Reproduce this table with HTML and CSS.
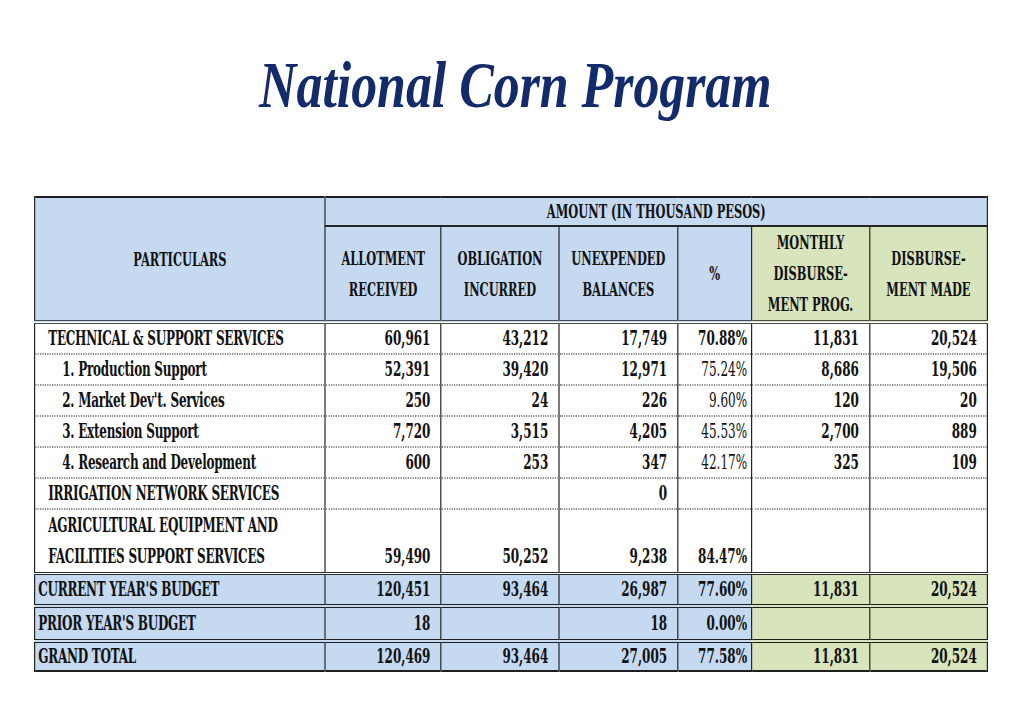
FILE: index.html
```html
<!DOCTYPE html>
<html lang="en">
<head>
<meta charset="utf-8">
<title>National Corn Program</title>
<link rel="stylesheet" href="styles.css">
</head>
<body>
<h1 class="title"><span class="title-text">National Corn Program</span></h1>
<div class="sheet-wrap">
<table class="sheet">
  <colgroup>
    <col class="c-part">
    <col class="c-alloc">
    <col class="c-oblig">
    <col class="c-unexp">
    <col class="c-pct">
    <col class="c-month">
    <col class="c-made">
  </colgroup>
  <thead>
    <tr class="hrow1">
      <th rowspan="2" class="blue part-h">PARTICULARS</th>
      <th colspan="6" class="blue amount">AMOUNT (IN THOUSAND PESOS)</th>
    </tr>
    <tr class="hrow2">
      <th class="blue">ALLOTMENT<br>RECEIVED</th>
      <th class="blue">OBLIGATION<br>INCURRED</th>
      <th class="blue">UNEXPENDED<br>BALANCES</th>
      <th class="blue">%</th>
      <th class="green">MONTHLY<br>DISBURSE-<br>MENT PROG.</th>
      <th class="green">DISBURSE-<br>MENT MADE</th>
    </tr>
  </thead>
  <tbody class="body-rows">
    <tr>
      <td class="lbl">TECHNICAL &amp; SUPPORT SERVICES</td>
      <td>60,961</td><td>43,212</td><td>17,749</td><td class="pct">70.88%</td><td>11,831</td><td>20,524</td>
    </tr>
    <tr>
      <td class="lbl sub">1. Production Support</td>
      <td>52,391</td><td>39,420</td><td>12,971</td><td class="pct reg">75.24%</td><td>8,686</td><td>19,506</td>
    </tr>
    <tr>
      <td class="lbl sub">2. Market Dev't. Services</td>
      <td>250</td><td>24</td><td>226</td><td class="pct reg">9.60%</td><td>120</td><td>20</td>
    </tr>
    <tr>
      <td class="lbl sub">3. Extension Support</td>
      <td>7,720</td><td>3,515</td><td>4,205</td><td class="pct reg">45.53%</td><td>2,700</td><td>889</td>
    </tr>
    <tr>
      <td class="lbl sub">4. Research and Development</td>
      <td>600</td><td>253</td><td>347</td><td class="pct reg">42.17%</td><td>325</td><td>109</td>
    </tr>
    <tr>
      <td class="lbl">IRRIGATION NETWORK SERVICES</td>
      <td></td><td></td><td>0</td><td class="pct"></td><td></td><td></td>
    </tr>
    <tr class="tall">
      <td class="lbl">AGRICULTURAL EQUIPMENT AND<br>FACILITIES SUPPORT SERVICES</td>
      <td>59,490</td><td>50,252</td><td>9,238</td><td class="pct">84.47%</td><td></td><td></td>
    </tr>
  </tbody>
  <tbody class="totals">
    <tr class="t-current">
      <td class="lbl tot blue">CURRENT YEAR'S BUDGET</td>
      <td class="blue">120,451</td><td class="blue">93,464</td><td class="blue">26,987</td><td class="pct blue">77.60%</td><td class="green">11,831</td><td class="green">20,524</td>
    </tr>
    <tr class="t-prior">
      <td class="lbl tot blue">PRIOR YEAR'S BUDGET</td>
      <td class="blue">18</td><td class="blue"></td><td class="blue">18</td><td class="pct blue">0.00%</td><td class="green"></td><td class="green"></td>
    </tr>
    <tr class="t-grand">
      <td class="lbl tot blue">GRAND TOTAL</td>
      <td class="blue">120,469</td><td class="blue">93,464</td><td class="blue">27,005</td><td class="pct blue">77.58%</td><td class="green">11,831</td><td class="green">20,524</td>
    </tr>
  </tbody>
</table>
</div>
</body>
</html>
```
FILE: styles.css
```css
html, body {
  margin: 0;
  padding: 0;
  overflow: hidden;
  background: #ffffff;
}

.title {
  margin: 52px 0 0 0;
  text-align: center;
  font-family: "Liberation Serif", "DejaVu Serif", serif;
  font-style: italic;
  font-weight: bold;
  font-size: 66px;
  line-height: 66px;
  color: #132a6b;
}

.title-text {
  display: inline-block;
  transform: scaleX(0.785);
  transform-origin: 50% 50%;
  padding-left: 10px;
}

.sheet-wrap {
  margin: 78px 0 0 34px;
}

.sheet {
  --k: 0.6;
  border-collapse: collapse;
  table-layout: fixed;
  width: calc(954px / var(--k));
  transform: scaleX(var(--k));
  transform-origin: 0 0;
  border: 2px solid #1e1e1e;
  font-family: "DejaVu Serif", "Liberation Serif", serif;
  font-weight: bold;
  color: #111111;
}

.c-part { width: 30.5%; }
.c-alloc { width: 12.16%; }
.c-oblig { width: 12.37%; }
.c-unexp { width: 12.47%; }
.c-pct { width: 7.76%; }
.c-month { width: 12.37%; }
.c-made { width: 12.37%; }

.sheet th,
.sheet td {
  border-left: 2.5px solid #262626;
  border-right: 2.5px solid #262626;
  padding: 0;
  white-space: nowrap;
}

.sheet th {
  font-size: 19px;
  line-height: 31px;
  text-align: center;
  vertical-align: middle;
  font-weight: bold;
}

.blue { background: #c5d9f1; }
.green { background: #d8e4bc; }

.hrow1 .amount {
  height: 27px;
  line-height: 27px;
  border-bottom: 2px solid #262626;
}

.hrow2 th {
  height: 93px;
}

.part-h { border-bottom: 4px double #4a4a4a; }
.hrow2 th { border-bottom: 4px double #4a4a4a; }

.sheet td {
  font-size: 20px;
  line-height: 29px;
  height: 29px;
  text-align: right;
  vertical-align: bottom;
  padding-right: calc(10px / var(--k));
}

.body-rows td {
  border-bottom: 2px dotted #8a8a8a;
}

.sheet td.pct { padding-right: calc(4px / var(--k)); }
.sheet td.reg { font-weight: normal; }

.sheet td.lbl {
  text-align: left;
  padding-left: calc(13px / var(--k));
  padding-right: 0;
  letter-spacing: -0.4px;
}

.sheet td.sub { padding-left: calc(27px / var(--k)); }

.tall td {
  height: 62px;
  line-height: 31px;
}

.sheet td.tot {
  padding-left: calc(3px / var(--k));
}

.t-current td {
  border-top: 3px double #2a2a2a;
  height: 29px;
  line-height: 29px;
}

.t-prior td {
  border-top: 4px double #1e1e1e;
  height: 31px;
  line-height: 31px;
}

.t-grand td {
  border-top: 4px double #1e1e1e;
  height: 27px;
  line-height: 27px;
}
```
